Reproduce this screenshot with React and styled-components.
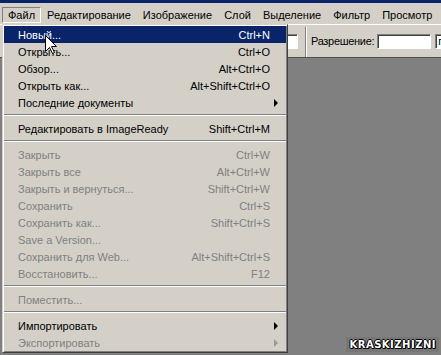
import React from 'react';
import styled, {createGlobalStyle, css} from 'styled-components';

const GlobalStyle = createGlobalStyle`
  html, body {
    margin: 0;
    padding: 0;
    background: #808080;
  }
  body {
    font-family: "Liberation Sans", Arial, sans-serif;
    font-size: 11px;
  }
`;

const menuBar = ['Файл', 'Редактирование', 'Изображение', 'Слой', 'Выделение', 'Фильтр', 'Просмотр', 'Окно'];

const fileMenu = [
    {label: 'Новый...', shortcut: 'Ctrl+N', active: true},
    {label: 'Открыть...', shortcut: 'Ctrl+O'},
    {label: 'Обзор...', shortcut: 'Alt+Ctrl+O'},
    {label: 'Открыть как...', shortcut: 'Alt+Shift+Ctrl+O'},
    {label: 'Последние документы', submenu: true},
    {separator: true},
    {label: 'Редактировать в ImageReady', shortcut: 'Shift+Ctrl+M'},
    {separator: true},
    {label: 'Закрыть', shortcut: 'Ctrl+W', disabled: true},
    {label: 'Закрыть все', shortcut: 'Alt+Ctrl+W', disabled: true},
    {label: 'Закрыть и вернуться...', shortcut: 'Shift+Ctrl+W', disabled: true},
    {label: 'Сохранить', shortcut: 'Ctrl+S', disabled: true},
    {label: 'Сохранить как...', shortcut: 'Shift+Ctrl+S', disabled: true},
    {label: 'Save a Version...', disabled: true},
    {label: 'Сохранить для Web...', shortcut: 'Alt+Shift+Ctrl+S', disabled: true},
    {label: 'Восстановить...', shortcut: 'F12', disabled: true},
    {separator: true},
    {label: 'Поместить...', disabled: true},
    {separator: true},
    {label: 'Импортировать', submenu: true},
    {label: 'Экспортировать', submenu: true, disabled: true}
];

export default function App() {
    return (
        <>
            <GlobalStyle/>
            <Screen>
                <TitleBar/>
                <MenuBar>
                    {menuBar.map((item, i) => (
                        <MenuBarItem key={item} $pressed={i === 0}>{item}</MenuBarItem>
                    ))}
                </MenuBar>
                <OptionsBar>
                    <Field $width={30}/>
                    <EtchedDivider/>
                    <OptionLabel>Разрешение:</OptionLabel>
                    <Field $width={54}/>
                    <Field $width={80}>пикселы/дюйм</Field>
                </OptionsBar>
                <Canvas/>

                <Dropdown>
                    {fileMenu.map((item, i) => item.separator ? (
                        <Separator key={i}/>
                    ) : (
                        <MenuRow key={i} $active={item.active} $disabled={item.disabled}>
                            <RowLabel>{item.label}</RowLabel>
                            <Shortcut>{item.shortcut}</Shortcut>
                            <ArrowCell>{item.submenu && <SubArrow $disabled={item.disabled}/>}</ArrowCell>
                        </MenuRow>
                    ))}
                </Dropdown>

                <Cursor width="13" height="20" viewBox="0 0 13 20">
                    <path d="M0.5 0.5 L0.5 16.5 L4.5 12.5 L7.5 18.5 L9.5 17.5 L6.5 11.5 L11.5 11.5 Z"
                          fill="#fff" stroke="#000" strokeWidth="1"/>
                </Cursor>

                <Watermark>KRASKIZHIZNI</Watermark>
            </Screen>
        </>
    );
}

const Screen = styled.div`
  position: relative;
  width: 441px;
  height: 355px;
  overflow: hidden;
  display: flex;
  flex-direction: column;
  background: #808080;
`;

const TitleBar = styled.div`
  height: 3px;
  background: #0a246a;
`;

const MenuBar = styled.div`
  display: flex;
  align-items: center;
  height: 21px;
  padding: 3px 0 0 2px;
  box-sizing: border-box;
  background: #d4d0c8;
  white-space: nowrap;
  overflow: hidden;
`;

const MenuBarItem = styled.div`
  flex: none;
  padding: 0 5px;
  height: 14px;
  line-height: 14px;
  border: 1px solid transparent;
  color: #000;
  ${p => p.$pressed && css`
    border-color: #808080 #fff #fff #808080;
  `}
`;

const OptionsBar = styled.div`
  display: flex;
  align-items: center;
  height: 34px;
  padding-left: 268px;
  box-sizing: border-box;
  background: #d4d0c8;
  border-top: 1px solid #fff;
  border-bottom: 1px solid #505050;
  white-space: nowrap;
  overflow: hidden;
`;

const Field = styled.div`
  flex: none;
  width: ${p => p.$width}px;
  height: 15px;
  line-height: 13px;
  box-sizing: border-box;
  padding-left: 2px;
  background: #fff;
  border: 1px solid;
  border-color: #808080 #fff #fff #808080;
  box-shadow: inset 1px 1px 0 #404040;
  margin-right: 4px;
  overflow: hidden;
`;

const EtchedDivider = styled.div`
  flex: none;
  align-self: stretch;
  width: 0;
  margin: 2px 4px 0 3px;
  border-left: 1px solid #808080;
  border-right: 1px solid #fff;
`;

const OptionLabel = styled.span`
  flex: none;
  letter-spacing: -0.3px;
  margin-right: 3px;
`;

const Canvas = styled.div`
  flex: 1;
  background: #808080;
`;

const Dropdown = styled.div`
  position: absolute;
  top: 24px;
  left: 2px;
  width: 286px;
  box-sizing: border-box;
  padding: 1px;
  background: #d4d0c8;
  border: 1px solid;
  border-color: #d4d0c8 #404040 #404040 #d4d0c8;
  box-shadow: inset 1px 1px 0 #fff, inset -1px -1px 0 #808080;
  white-space: nowrap;
`;

const MenuRow = styled.div`
  display: flex;
  align-items: center;
  height: 17px;
  padding: 0 4px 0 14px;
  color: ${p => p.$disabled ? '#808080' : '#000'};
  ${p => p.$active && css`
    background: #0a246a;
    color: #fff;
  `}
`;

const RowLabel = styled.span`
  flex: 1;
`;

const Shortcut = styled.span`
  text-align: right;
`;

const ArrowCell = styled.span`
  width: 12px;
  display: flex;
  justify-content: flex-end;
  padding-right: 4px;
  box-sizing: border-box;
`;

const SubArrow = styled.span`
  width: 0;
  height: 0;
  border-top: 4px solid transparent;
  border-bottom: 4px solid transparent;
  border-left: 4px solid ${p => p.$disabled ? '#9a9a9a' : '#000'};
`;

const Separator = styled.div`
  height: 9px;
  box-sizing: border-box;
  padding-top: 3px;
  &::before {
    content: '';
    display: block;
    border-top: 1px solid #808080;
    border-bottom: 1px solid #fff;
  }
`;

const Cursor = styled.svg`
  position: absolute;
  left: 45px;
  top: 35px;
`;

const Watermark = styled.div`
  position: absolute;
  right: 2px;
  bottom: 3px;
  padding: 2px 3px;
  background: #777;
  color: #fff;
  font-family: "DejaVu Sans", sans-serif;
  font-weight: bold;
  font-size: 10px;
  letter-spacing: 0.5px;
  text-shadow: 1px 0 0 #000, -1px 0 0 #000, 0 1px 0 #000, 0 -1px 0 #000, 1px 1px 0 #000;
`;
